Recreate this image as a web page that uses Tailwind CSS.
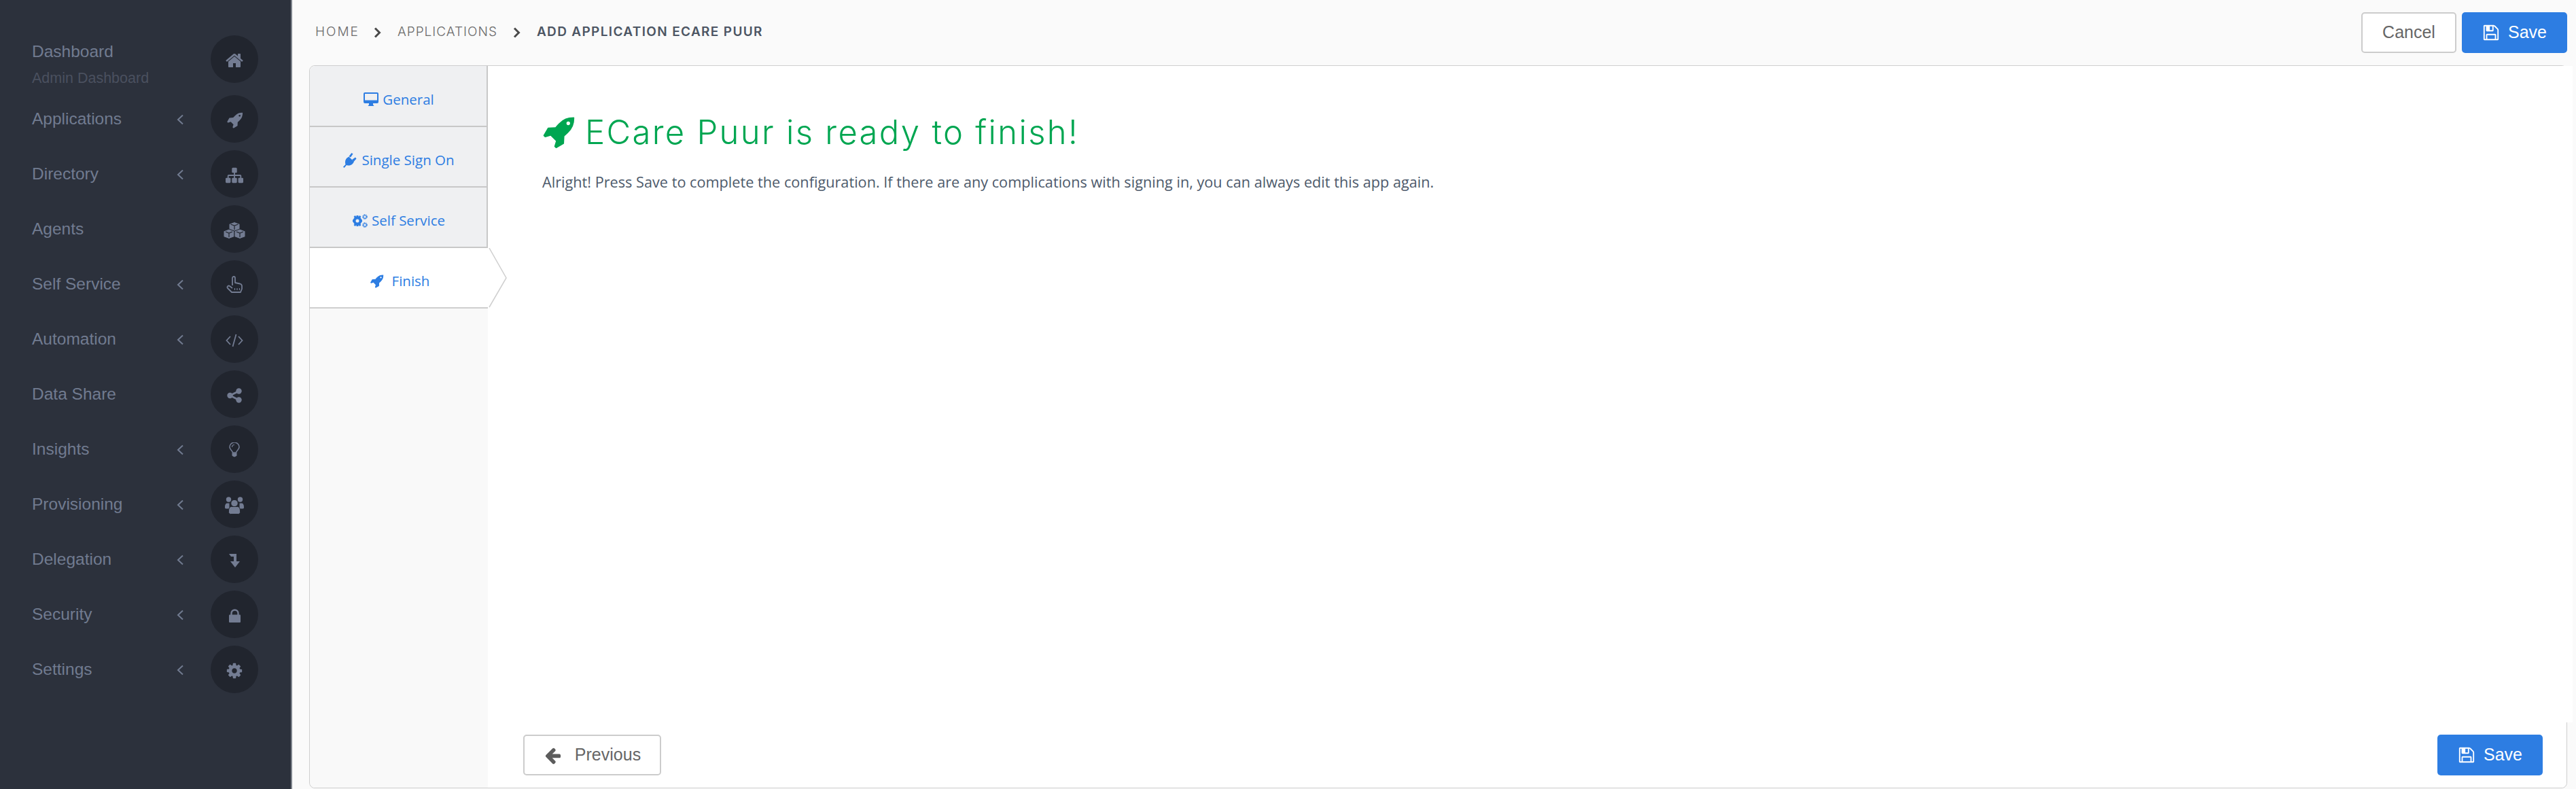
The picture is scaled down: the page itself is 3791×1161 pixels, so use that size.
<!DOCTYPE html>
<html lang="en">
<head>
  <meta charset="UTF-8" />
  <title>Add Application</title>
  <script src="https://cdn.jsdelivr.net/npm/@tailwindcss/browser@4"></script>
</head>
<body class="h-[1161px] overflow-hidden flex bg-[#fafafa] font-['Liberation_Sans',sans-serif]">

  <!-- Sidebar -->
  <aside class="w-[430px] h-full shrink-0 bg-[#2c313c] border-r-2 border-[#7d828b] pt-[52px] text-[24.500px] leading-[28px] text-[#717b90]">
    <div class="flex h-[70px] pl-[47px] mb-[18px]">
      <div class="w-[263px]">
        <div class="mt-[10px]">Dashboard</div>
        <div class="mt-[13px] text-[21.500px] leading-[24px] text-[#4a505f]">Admin Dashboard</div>
      </div>
      <div class="w-[70px] h-[70px] rounded-full bg-[#21252e] flex items-center justify-center">
        <svg class="w-[28px] h-[28px] mt-[4px] fill-[#737c92]" viewBox="0 0 1792 1792"><path d="M1472 992v480q0 26-19 45t-45 19h-384v-384h-256v384h-384q-26 0-45-19t-19-45v-480q0-1 .5-3t.5-3l575-474 575 474q1 2 1 6zm223-69l-62 74q-8 9-21 11h-3q-13 0-21-7l-692-577-692 577q-12 8-24 7-13-2-21-11l-62-74q-8-10-7-23.500t11-21.500l719-599q32-26 76-26t76 26l244 204v-195q0-14 9-23t23-9h192q14 0 23 9t9 23v408l219 182q10 8 11 21.500t-7 23.500z"/></svg>
      </div>
    </div>

    <div class="flex flex-col gap-[11px]">
      <div class="flex items-center h-[70px] pl-[47px]">
        <span class="w-[213px]">Applications</span>
        <svg class="w-[50px] h-[16px] mt-[2px] stroke-[#717b90] fill-none" viewBox="0 0 50 16"><path d="M9 1.500 2 8l7 6.500" stroke-width="2"/></svg>
        <div class="w-[70px] h-[70px] rounded-full bg-[#21252e] flex items-center justify-center">
          <svg class="w-[25px] h-[25px] mt-[2px] fill-[#737c92]" viewBox="0 0 1792 1792"><path fill-rule="evenodd" d="M1504 448q0-40-28-68t-68-28-68 28-28 68 28 68 68 28 68-28 28-68zm224-288q0 249-75.500 430.500t-253.500 360.500q-81 80-195 176l-20 379q-2 16-16 26l-384 224q-7 4-16 4-12 0-23-9l-64-64q-13-14-8-32l85-276-281-281-276 85q-3 1-9 1-14 0-23-9l-64-64q-17-19-5-39l224-384q10-14 26-16l379-20q96-114 176-195 188-187 358-258t431-71q14 0 24 9.500t10 22.500z"/></svg>
        </div>
      </div>
      <div class="flex items-center h-[70px] pl-[47px]">
        <span class="w-[213px]">Directory</span>
        <svg class="w-[50px] h-[16px] mt-[2px] stroke-[#717b90] fill-none" viewBox="0 0 50 16"><path d="M9 1.500 2 8l7 6.500" stroke-width="2"/></svg>
        <div class="w-[70px] h-[70px] rounded-full bg-[#21252e] flex items-center justify-center">
          <svg class="w-[26px] h-[26px] mt-[4px] fill-[#737c92]" viewBox="0 0 1792 1792"><path d="M1792 1248v320q0 40-28 68t-68 28h-320q-40 0-68-28t-28-68v-320q0-40 28-68t68-28h96v-192h-512v192h96q40 0 68 28t28 68v320q0 40-28 68t-68 28h-320q-40 0-68-28t-28-68v-320q0-40 28-68t68-28h96v-192h-512v192h96q40 0 68 28t28 68v320q0 40-28 68t-68 28h-320q-40 0-68-28t-28-68v-320q0-40 28-68t68-28h96v-192q0-52 38-90t90-38h512v-192h-96q-40 0-68-28t-28-68v-320q0-40 28-68t68-28h320q40 0 68 28t28 68v320q0 40-28 68t-68 28h-96v192h512q52 0 90 38t38 90v192h96q40 0 68 28t28 68z"/></svg>
        </div>
      </div>
      <div class="flex items-center h-[70px] pl-[47px]">
        <span class="w-[263px]">Agents</span>
        <div class="w-[70px] h-[70px] rounded-full bg-[#21252e] flex items-center justify-center">
          <svg class="w-[32px] h-[26px] mt-[3px]" viewBox="0 0 32 26"><g fill="#737c92" stroke="#21252e" stroke-width="1"><path d="M16 .5 24 3.500v9l-8 3-8-3v-9z"/><path d="M8 11 16 14v8.500l-8 3-8-3V14z"/><path d="M24 11 32 14v8.500l-8 3-8-3V14z"/></g><g fill="none" stroke="#21252e" stroke-width="1.200"><path d="M10.500 4 16 6l5.500-2M16 6v6"/><path d="M3 15l5 2 5-2M8 17v6"/><path d="M19 15l5 2 5-2M24 17v6" /></g></svg>
        </div>
      </div>
      <div class="flex items-center h-[70px] pl-[47px]">
        <span class="w-[213px]">Self Service</span>
        <svg class="w-[50px] h-[16px] mt-[2px] stroke-[#717b90] fill-none" viewBox="0 0 50 16"><path d="M9 1.500 2 8l7 6.500" stroke-width="2"/></svg>
        <div class="w-[70px] h-[70px] rounded-full bg-[#21252e] flex items-center justify-center">
          <svg class="w-[24px] h-[26px] mt-[2px]" viewBox="0 0 24 26" fill="none" stroke="#737c92" stroke-width="1.800" stroke-linejoin="round"><path d="M9 14V3a2 2 0 0 1 4 0v7l7 1.500c2 .5 3 1.500 3 3.500v4l-2 5H8l-6-6c-1.500-2 1-4.500 3-3l4 3"/><path d="M12.500 18v3M16 18v3M19.500 18v3" stroke-width="1.200"/></svg>
        </div>
      </div>
      <div class="flex items-center h-[70px] pl-[47px]">
        <span class="w-[213px]">Automation</span>
        <svg class="w-[50px] h-[16px] mt-[2px] stroke-[#717b90] fill-none" viewBox="0 0 50 16"><path d="M9 1.500 2 8l7 6.500" stroke-width="2"/></svg>
        <div class="w-[70px] h-[70px] rounded-full bg-[#21252e] flex items-center justify-center">
          <svg class="w-[26px] h-[20px] mt-[3px]" viewBox="0 0 26 20" fill="none" stroke="#737c92" stroke-width="1.800"><path d="M7 4 1.500 10 7 16M19 4l5.500 6-5.500 6M15.500 1 10.500 19"/></svg>
        </div>
      </div>
      <div class="flex items-center h-[70px] pl-[47px]">
        <span class="w-[263px]">Data Share</span>
        <div class="w-[70px] h-[70px] rounded-full bg-[#21252e] flex items-center justify-center">
          <svg class="w-[22px] h-[22px] mt-[3px]" viewBox="0 0 22 22" fill="#737c92"><circle cx="17.500" cy="4.500" r="4.200"/><circle cx="17.500" cy="17.500" r="4.200"/><circle cx="4.500" cy="11" r="4.200"/><path d="M4.500 11 17.500 4.500M4.500 11l13 6.500" stroke="#737c92" stroke-width="2.800"/></svg>
        </div>
      </div>
      <div class="flex items-center h-[70px] pl-[47px]">
        <span class="w-[213px]">Insights</span>
        <svg class="w-[50px] h-[16px] mt-[2px] stroke-[#717b90] fill-none" viewBox="0 0 50 16"><path d="M9 1.500 2 8l7 6.500" stroke-width="2"/></svg>
        <div class="w-[70px] h-[70px] rounded-full bg-[#21252e] flex items-center justify-center">
          <svg class="w-[16px] h-[22px] mt-[2px]" viewBox="0 0 16 22"><path d="M5.500 15c-.5-3-4.500-4.500-4.500-8a7 7 0 0 1 14 0c0 3.500-4 5-4.500 8z" fill="none" stroke="#737c92" stroke-width="1.600"/><path d="M4.500 15.500h7v3.500c0 1-1 1.300-1.500 1.500-.5 1-3.500 1-4 0-.5-.2-1.500-.5-1.500-1.500z" fill="#737c92"/><path d="M4.500 7A3.500 3.500 0 0 1 8 3.500" fill="none" stroke="#737c92" stroke-width="1.200"/></svg>
        </div>
      </div>
      <div class="flex items-center h-[70px] pl-[47px]">
        <span class="w-[213px]">Provisioning</span>
        <svg class="w-[50px] h-[16px] mt-[2px] stroke-[#717b90] fill-none" viewBox="0 0 50 16"><path d="M9 1.500 2 8l7 6.500" stroke-width="2"/></svg>
        <div class="w-[70px] h-[70px] rounded-full bg-[#21252e] flex items-center justify-center">
          <svg class="w-[28px] h-[26px] mt-[3px]" viewBox="0 0 28 26" fill="#737c92"><circle cx="5.500" cy="4" r="3.700"/><circle cx="22.500" cy="4" r="3.700"/><path d="M0 15.500C0 12 1 9.500 3.500 9.500h3v8H1.500C.5 17.500 0 16.500 0 15.500zM28 15.500c0-3.500-1-6-3.500-6h-3v8h5c1 0 1.500-1 1.500-2z"/><circle cx="14" cy="9.500" r="5.200" stroke="#21252e" stroke-width="1"/><path d="M5.500 21c0-3.500 1.500-6.500 4-6.500h9c2.500 0 4 3 4 6.500v1.500c0 2-1.500 3-3 3H8.500c-1.500 0-3-1-3-3z" stroke="#21252e" stroke-width="1"/></svg>
        </div>
      </div>
      <div class="flex items-center h-[70px] pl-[47px]">
        <span class="w-[213px]">Delegation</span>
        <svg class="w-[50px] h-[16px] mt-[2px] stroke-[#717b90] fill-none" viewBox="0 0 50 16"><path d="M9 1.500 2 8l7 6.500" stroke-width="2"/></svg>
        <div class="w-[70px] h-[70px] rounded-full bg-[#21252e] flex items-center justify-center">
          <svg class="w-[16px] h-[20px] mt-[3px]" viewBox="0 0 16 20" fill="#737c92"><path d="M0 0h11v11h5l-7 9-7-9h5V4H3z"/></svg>
        </div>
      </div>
      <div class="flex items-center h-[70px] pl-[47px]">
        <span class="w-[213px]">Security</span>
        <svg class="w-[50px] h-[16px] mt-[2px] stroke-[#717b90] fill-none" viewBox="0 0 50 16"><path d="M9 1.500 2 8l7 6.500" stroke-width="2"/></svg>
        <div class="w-[70px] h-[70px] rounded-full bg-[#21252e] flex items-center justify-center">
          <svg class="w-[17px] h-[20px] mt-[4px]" viewBox="0 0 17 20"><path d="M3.500 9V6.500a5 5 0 0 1 10 0V9" fill="none" stroke="#737c92" stroke-width="2.400"/><rect x="0" y="8.500" width="17" height="11.500" rx="1" fill="#737c92"/></svg>
        </div>
      </div>
      <div class="flex items-center h-[70px] pl-[47px]">
        <span class="w-[213px]">Settings</span>
        <svg class="w-[50px] h-[16px] mt-[2px] stroke-[#717b90] fill-none" viewBox="0 0 50 16"><path d="M9 1.500 2 8l7 6.500" stroke-width="2"/></svg>
        <div class="w-[70px] h-[70px] rounded-full bg-[#21252e] flex items-center justify-center">
          <svg class="w-[26px] h-[26px] mt-[4px] fill-[#737c92]" viewBox="0 0 1792 1792"><path d="M1152 896q0-106-75-181t-181-75-181 75-75 181 75 181 181 75 181-75 75-181zm512-109v222q0 12-8 23t-20 13l-185 28q-19 54-39 91 35 50 107 138 10 12 10 25t-9 23q-27 37-99 108t-94 71q-12 0-26-9l-138-108q-44 23-91 38-16 136-29 186-7 28-36 28h-222q-14 0-24.500-8.500t-11.500-21.500l-28-184q-49-16-90-37l-141 107q-10 9-25 9-14 0-25-11-126-114-165-168-7-10-7-23 0-12 8-23 15-21 51-66.500t54-70.500q-27-50-41-99l-183-27q-13-2-21-12.500t-8-23.500v-222q0-12 8-23t19-13l186-28q14-46 39-92-40-57-107-138-10-12-10-24 0-10 9-23 26-36 98.500-107.500t94.500-71.500q13 0 26 10l138 107q44-23 91-38 16-136 29-186 7-28 36-28h222q14 0 24.500 8.500t11.500 21.500l28 184q49 16 90 37l142-107q9-9 24-9 13 0 25 10 129 119 165 170 7 8 7 22 0 12-8 23-15 21-51 66.500t-54 70.500q26 50 41 98l183 28q13 2 21 12.500t8 23.500z"/></svg>
        </div>
      </div>
    </div>
  </aside>

  <!-- Main -->
  <main class="flex-1 min-w-0 pl-[25px] pr-[13px]">
    <header class="h-[96px] flex items-center justify-between">
      <nav class="flex items-center pl-[9px] pb-[1px] text-[19px] font-['Inter',sans-serif] text-[#6b6b6b] font-light">
        <span class="tracking-[2px]">HOME</span>
        <svg class="w-[11px] h-[16px] ml-[21px] mr-[24px] fill-none stroke-[#4a4a4a]" viewBox="0 0 11 16"><path d="M2 1.500 8.500 8 2 14.500" stroke-width="3"/></svg>
        <span class="tracking-[1px]">APPLICATIONS</span>
        <svg class="w-[11px] h-[16px] ml-[23px] mr-[24px] fill-none stroke-[#4a4a4a]" viewBox="0 0 11 16"><path d="M2 1.500 8.500 8 2 14.500" stroke-width="3"/></svg>
        <span class="font-semibold tracking-[1.350px] text-[#4c5563]">ADD APPLICATION ECARE PUUR</span>
      </nav>
      <div class="flex gap-[8px] text-[25px]">
        <button class="w-[140px] h-[60px] rounded-[5px] border-2 border-[#ccc] bg-white text-[#666]">Cancel</button>
        <button class="w-[155px] h-[60px] rounded-[5px] bg-[#2d7de2] text-white flex items-center justify-center gap-[12px]">
          <svg class="w-[26px] h-[26px] fill-white" viewBox="0 0 1792 1792"><path d="M512 1536h768v-384h-768v384zm896 0h128v-896q0-14-10-38.500t-20-34.500l-281-281q-10-10-34-20t-39-10v416q0 40-28 68t-68 28h-576q-40 0-68-28t-28-68v-416h-128v1280h128v-416q0-40 28-68t68-28h832q40 0 68 28t28 68v416zm-384-928v-320q0-13-9.500-22.500t-22.500-9.500h-192q-13 0-22.500 9.500t-9.500 22.500v320q0 13 9.500 22.500t22.500 9.500h192q13 0 22.500-9.500t9.500-22.500zm640 32v928q0 40-28 68t-68 28h-1344q-40 0-68-28t-28-68v-1344q0-40 28-68t68-28h928q40 0 88 20t76 48l280 280q28 28 48 76t20 88z"/></svg>
          Save
        </button>
      </div>
    </header>

    <section class="h-[1064px] rounded-lg border border-[#cfcfcf] flex">
      <!-- Tabs -->
      <div class="w-[262px] shrink-0 rounded-l-lg bg-[#f9f9f9] font-['Open_Sans',sans-serif] text-[20.500px] text-[#2d7de2]">
        <div class="h-[90px] pt-[10px] pl-[2px] flex items-center justify-center gap-[6px] bg-[#eff0f2] border-b-2 border-r-2 border-[#c8c8c8] rounded-tl-lg">
          <svg class="w-[22px] h-[20px]" viewBox="0 0 22 20"><path fill="#2d7de2" fill-rule="evenodd" d="M2 0h18a2 2 0 0 1 2 2v12a2 2 0 0 1-2 2h-6v2l1.500 2h-9L8 18v-2H2a2 2 0 0 1-2-2V2a2 2 0 0 1 2-2zm0 2v9.500h18V2z"/></svg>
          <span>General</span>
        </div>
        <div class="h-[89px] pt-[10px] pl-[2px] flex items-center justify-center gap-[6px] bg-[#eff0f2] border-b-2 border-r-2 border-[#c8c8c8]">
          <svg class="w-[21px] h-[22px]" viewBox="0 0 21 22" fill="#2d7de2"><path d="M3 14c0-3 1-5 2.500-6.500l3-2L16 13l-2 3c-2 2-4 2.500-6.500 2.500-1 0-2-.5-2.500-.5L1.500 22 0 20.500 3.500 17c-.3-1-.5-2-.5-3z"/><path d="M8.500 5 12.500 0l2 1.500-3.500 5zM13 10l5-3.500 1.500 2-4 4.500z"/></svg>
          <span>Single Sign On</span>
        </div>
        <div class="h-[89px] pt-[10px] pl-[2px] flex items-center justify-center gap-[6px] bg-[#eff0f2] border-b-2 border-r-2 border-[#c8c8c8]">
          <svg class="w-[22px] h-[20px]" viewBox="0 0 22 20" fill="#2d7de2"><circle cx="7" cy="10" r="4.500" fill="none" stroke="#2d7de2" stroke-width="4"/><path d="M5.500 2h3v3h-3zM5.500 15h3v3h-3zM0 8.500h3v3H0zM11 8.500h3v3h-3zM1.500 4l2-2 2 2-2 2zM8.500 4l2-2 2 2-2 2zM1.500 16l2 2 2-2-2-2zM8.500 16l2 2 2-2-2-2z"/><circle cx="18" cy="4" r="2.600" fill="none" stroke="#2d7de2" stroke-width="2.200" stroke-dasharray="1.500 .6"/><circle cx="18" cy="16" r="2.600" fill="none" stroke="#2d7de2" stroke-width="2.200" stroke-dasharray="1.500 .6"/></svg>
          <span>Self Service</span>
        </div>
        <div class="relative h-[89px] pt-[10px] pl-[2px] flex items-center justify-center gap-[12px] bg-white border-b-2 border-[#cfcfcf]">
          <svg class="w-[21px] h-[21px] fill-[#2d7de2]" viewBox="0 0 1792 1792"><path fill-rule="evenodd" d="M1504 448q0-40-28-68t-68-28-68 28-28 68 28 68 68 28 68-28 28-68zm224-288q0 249-75.500 430.500t-253.500 360.500q-81 80-195 176l-20 379q-2 16-16 26l-384 224q-7 4-16 4-12 0-23-9l-64-64q-13-14-8-32l85-276-281-281-276 85q-3 1-9 1-14 0-23-9l-64-64q-17-19-5-39l224-384q10-14 26-16l379-20q96-114 176-195 188-187 358-258t431-71q14 0 24 9.500t10 22.500z"/></svg>
          <span>Finish</span>
          <svg class="absolute left-[262px] top-0 w-[30px] h-[89px] fill-none stroke-[#cfcfcf]" viewBox="0 0 30 89"><path d="M2 0 27 44 2 87" stroke-width="1.500"/></svg>
        </div>
      </div>

      <!-- Content -->
      <div class="flex-1 min-w-0 flex flex-col">
        <div class="h-[966px] -mr-[9px] bg-white pl-[79px] pt-[69px]">
          <h1 class="flex items-center gap-[14px] text-[49px] leading-[58px] text-[#00a651] font-['Inter',sans-serif]">
            <svg class="w-[50px] h-[50px] shrink-0 -mt-[2px] fill-[#00a651]" viewBox="0 0 1792 1792"><path fill-rule="evenodd" d="M1504 448q0-40-28-68t-68-28-68 28-28 68 28 68 68 28 68-28 28-68zm224-288q0 249-75.500 430.500t-253.500 360.500q-81 80-195 176l-20 379q-2 16-16 26l-384 224q-7 4-16 4-12 0-23-9l-64-64q-13-14-8-32l85-276-281-281-276 85q-3 1-9 1-14 0-23-9l-64-64q-17-19-5-39l224-384q10-14 26-16l379-20q96-114 176-195 188-187 358-258t431-71q14 0 24 9.500t10 22.500z"/></svg>
            <span class="font-light tracking-[2.300px]">ECare Puur is ready to finish!</span>
          </h1>
          <p class="mt-[30px] ml-[1px] text-[21.700px] leading-[28px] text-[#4d5a6b] font-['Open_Sans',sans-serif]">Alright! Press Save to complete the configuration. If there are any complications with signing in, you can always edit this app again.</p>
        </div>
        <div class="flex-1 bg-white rounded-br-lg flex justify-between pl-[52px] pr-[35px] pt-[18px] text-[25px]">
          <button class="w-[203px] h-[60px] rounded-[5px] border-2 border-[#ccc] bg-white text-[#666] flex items-center justify-center gap-[19px]">
            <svg class="w-[27px] h-[27px] fill-[#5c5c5c]" viewBox="0 0 1792 1792"><path d="M1664 896v128q0 53-32.500 90.500t-84.500 37.500h-704l293 294q38 36 38 90t-38 90l-75 76q-37 37-90 37-52 0-91-37l-651-652q-37-37-37-90 0-52 37-91l651-650q38-38 91-38 52 0 90 38l75 74q38 38 38 91t-38 91l-293 293h704q52 0 84.500 37.500t32.500 90.500z"/></svg>
            Previous
          </button>
          <button class="w-[155px] h-[60px] rounded-[5px] bg-[#2d7de2] text-white flex items-center justify-center gap-[12px]">
            <svg class="w-[26px] h-[26px] fill-white" viewBox="0 0 1792 1792"><path d="M512 1536h768v-384h-768v384zm896 0h128v-896q0-14-10-38.500t-20-34.500l-281-281q-10-10-34-20t-39-10v416q0 40-28 68t-68 28h-576q-40 0-68-28t-28-68v-416h-128v1280h128v-416q0-40 28-68t68-28h832q40 0 68 28t28 68v416zm-384-928v-320q0-13-9.500-22.500t-22.500-9.500h-192q-13 0-22.500 9.500t-9.500 22.500v320q0 13 9.500 22.500t22.500 9.500h192q13 0 22.500-9.500t9.500-22.500zm640 32v928q0 40-28 68t-68 28h-1344q-40 0-68-28t-28-68v-1344q0-40 28-68t68-28h928q40 0 88 20t76 48l280 280q28 28 48 76t20 88z"/></svg>
            Save
          </button>
        </div>
      </div>
    </section>
  </main>
</body>
</html>
